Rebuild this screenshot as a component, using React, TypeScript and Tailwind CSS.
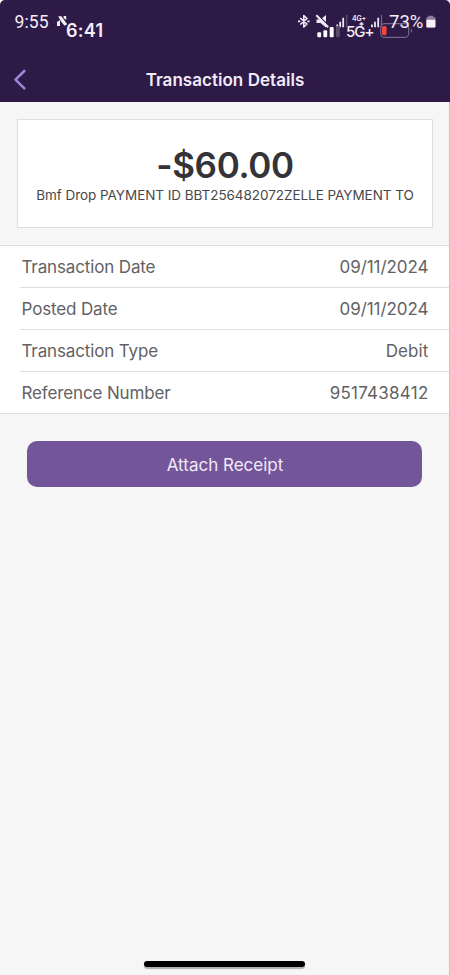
const rows = [
  { label: "Transaction Date", value: "09/11/2024", valueTrack: "tracking-[-0.05px]" },
  { label: "Posted Date", value: "09/11/2024", valueTrack: "tracking-[-0.05px]" },
  { label: "Transaction Type", value: "Debit", valueTrack: "tracking-[0.1px]" },
  { label: "Reference Number", value: "9517438412", valueTrack: "tracking-[0.25px]" },
];

function StatusIcons() {
  return (
    <svg className="absolute left-[290px] top-0" width="160" height="55" viewBox="0 0 160 55" fill="none">
      {/* bluetooth */}
      <path
        d="M10.3 18.2 L17 24 L13.8 27 V15.5 L17 18.5 L10.3 24.5"
        stroke="#f1ebf7"
        strokeWidth="1.6"
        strokeLinejoin="round"
      />
      <path d="M8 21.3h2.2M17.4 21.3h2.2" stroke="#f1ebf7" strokeWidth="1.8" />
      {/* muted speaker */}
      <path d="M26.5 19.5h4l5.5-4.5V27.5l-5.5-4.5h-4z" fill="#f1ebf7" />
      <path d="M27.5 14.5 L39.5 26.5" stroke="#2d1a47" strokeWidth="1.2" />
      <path d="M26.3 15.3 L38.2 27.2" stroke="#f1ebf7" strokeWidth="2" />
      {/* thin signal bars */}
      <path d="M47.3 27.3v-2.8M50.2 27.3v-5.5M53.2 27.3v-9.5" stroke="#eee6f4" strokeWidth="1.8" />
      <path d="M56.7 27.3V15" stroke="#65547c" strokeWidth="1.2" />
      <path d="M59 26.5h8" stroke="#53406b" strokeWidth="1" />
      <path d="M82 27.3v-2.8M85 27.3v-5.5M88.2 27.3v-9.5" stroke="#eee6f4" strokeWidth="1.8" />
      <path d="M91.5 27.3V15" stroke="#75658b" strokeWidth="1.2" />
      {/* data arrows */}
      <path d="M69.5 24.5l2-2 2 2M71.5 22.5v3.5" stroke="#d9cde3" strokeWidth="1.2" />
      {/* thick signal bars */}
      <rect x="27.3" y="32.3" width="3.8" height="5" rx="1" fill="#fff" />
      <rect x="33.4" y="30.3" width="3.8" height="7" rx="1" fill="#fff" />
      <rect x="39.7" y="27" width="4" height="10.3" rx="1" fill="#fff" />
      <rect x="46" y="26" width="3.8" height="11.3" rx="1" fill="#594a6e" />
      {/* low battery */}
      <rect x="90.7" y="23.7" width="28" height="13.7" rx="4" stroke="#75658b" strokeWidth="1.2" />
      <rect x="92" y="26" width="4.6" height="9.2" rx="1.8" fill="#f0443c" />
      <path d="M120.8 28.5c1.8.8 1.8 3.6 0 4.4z" fill="#75658b" />
      {/* upright battery */}
      <path d="M138.2 15.8h5v1.7h-5z" fill="#8c7da0" />
      <rect x="136.4" y="17" width="9" height="10.5" rx="1.3" fill="#8c7da0" />
      <path d="M136.4 19.7h9v6.5q0 1.3-1.3 1.3h-6.4q-1.3 0-1.3-1.3z" fill="#f7f1fa" />
    </svg>
  );
}

function StatusBar() {
  return (
    <div className="relative h-[57px] whitespace-nowrap text-[#f4eef8]">
      <span className="absolute left-[14.5px] top-[13px] text-[17.5px] leading-[18px] font-normal tracking-[0.1px] font-[Roboto,sans-serif]">9:55</span>
      <svg className="absolute left-[56px] top-[15px]" width="14" height="13" viewBox="0 0 14 13">
        <path d="M1 6.8l3-1.5V11H1zM2.2 1.2h3.2L11.2 9.2l-2.6 1.6L5 6.5z M7.6 1h2.6v4L7.6 3z" fill="#f4eef8" />
      </svg>
      <span className="absolute left-[66px] top-[22px] text-[18px] leading-[18px] font-semibold tracking-[0.3px]">6:41</span>
      <StatusIcons />
      <span className="absolute left-[352px] top-[14.5px] text-[7px] leading-[8px] font-semibold tracking-[-0.2px]">4G+</span>
      <span className="absolute left-[346px] top-[24px] text-[15px] leading-[16px] font-medium tracking-[-1px]">5G+</span>
      <span className="absolute left-[389px] top-[13px] text-[18.5px] leading-[18px] font-normal font-[Roboto,sans-serif]">73%</span>
    </div>
  );
}

export default function App() {
  return (
    <div className="w-[450px] h-[975px] bg-white overflow-hidden font-[Inter,sans-serif]">
      <div className="flex h-full flex-col overflow-hidden rounded-t-[5px] bg-[#f6f6f6]">
        <header className="h-[102px] shrink-0 bg-[#2d1a47]">
          <StatusBar />
          <div className="grid h-[45px] grid-cols-[1fr_auto_1fr] items-center">
            <button className="ml-[13px] w-[14px]" aria-label="Back">
              <svg width="14" height="22" viewBox="0 0 14 22" fill="none">
                <path d="M11.3 2 L2.5 10.6 L11.3 19.4" stroke="#9a87d8" strokeWidth="2.6" strokeLinecap="round" strokeLinejoin="round" />
              </svg>
            </button>
            <h1 className="text-[17px] leading-[22px] font-semibold tracking-[0.04px] text-[#f1eaf6]">Transaction Details</h1>
          </div>
        </header>

        <main className="flex flex-1 flex-col border-r border-[#c6c6c8]">
          <section className="mt-[17px] ml-[17px] flex h-[109px] w-[416px] flex-col items-center border border-[#dedede] bg-white pt-[25px] whitespace-nowrap">
            <p className="text-[35px] leading-[41px] font-semibold tracking-[-0.35px] text-[#333338]">-$60.00</p>
            <p className="text-[13.5px] leading-[18px] tracking-[-0.05px] text-[#48484a]">
              Bmf Drop PAYMENT ID BBT256482072ZELLE PAYMENT TO
            </p>
          </section>

          <dl className="mt-[17px] border-y border-[#dedee0] bg-white">
            {rows.map((row, i) => (
              <div
                key={row.label}
                className={
                  i < rows.length - 1
                    ? "ml-[20px] flex h-[42px] items-center justify-between border-b border-[#dedee0] pt-[2px] pr-[20.5px] pl-[1.5px] text-[17px] text-[#626264]"
                    : "ml-[20px] flex h-[41px] items-center justify-between pt-[2px] pr-[20.5px] pl-[1.5px] text-[17px] text-[#626264]"
                }
              >
                <dt className="tracking-[-0.14px]">{row.label}</dt>
                <dd className={row.valueTrack}>{row.value}</dd>
              </div>
            ))}
          </dl>

          <button className="mt-[27px] ml-[27px] h-[46px] w-[395px] rounded-[10px] bg-[#725699] pt-[3px] pl-[1px] text-[17px] text-[#f3e9f8]">
            Attach Receipt
          </button>

          <div className="mt-auto mb-[8px] ml-[144px] h-[6px] w-[161px] rounded-full bg-black shadow-[0_2px_1px_#b0b0b0]" />
        </main>
      </div>
    </div>
  );
}
